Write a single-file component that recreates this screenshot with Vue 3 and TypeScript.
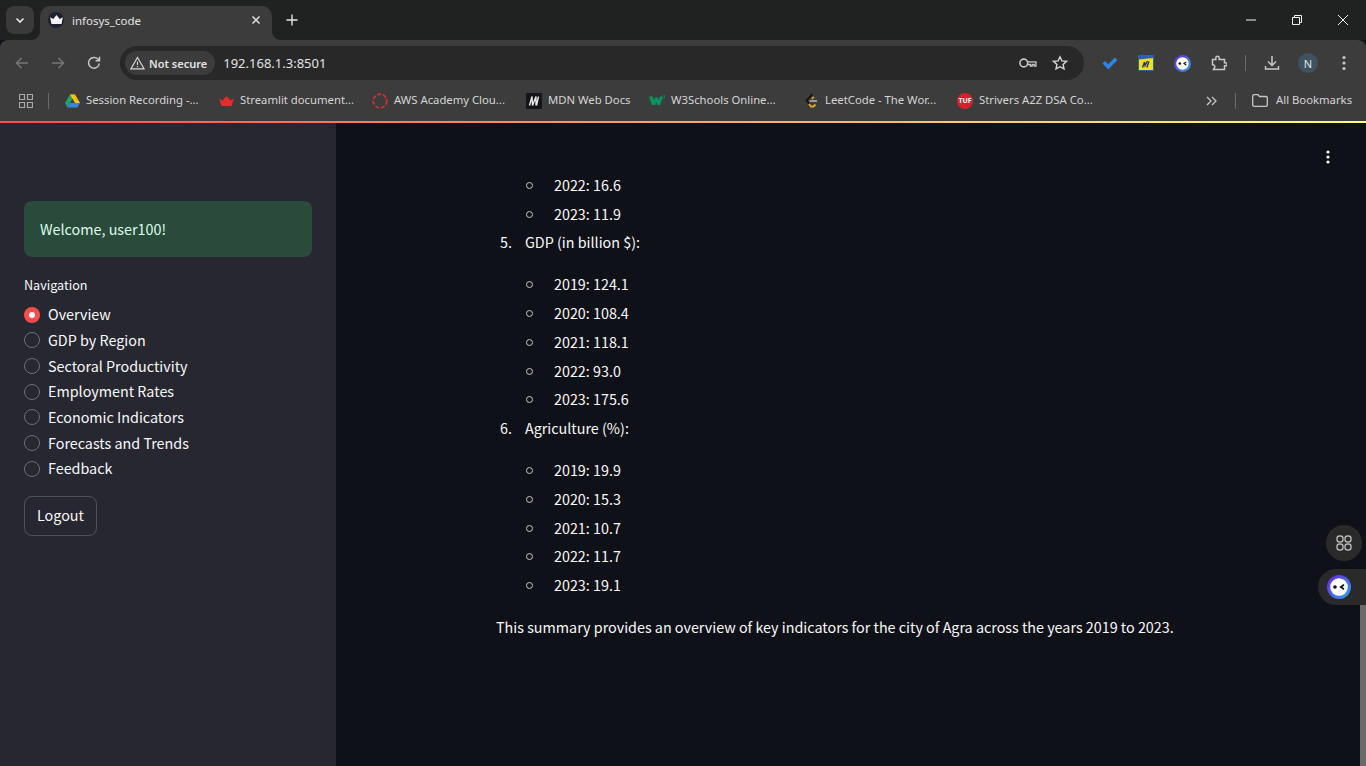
<template>
  <div class="window">
    <!-- Tab strip -->
    <div class="tabstrip">
      <div class="tab-search">
        <svg width="12" height="12" viewBox="0 0 12 12"><path d="M2.500 4.500 6 8l3.500-3.500" fill="none" stroke="#e3e3e3" stroke-width="1.700" /></svg>
      </div>
      <div class="tab">
        <span class="tab-favicon">
          <svg width="13" height="10" viewBox="0 0 14 11"><path d="M0 2.500l3.500 2L7 0l3.500 4.500 3.500-2-1.500 7.500h-11z" fill="#f4f4f4" /></svg>
        </span>
        <span class="tab-title">infosys_code</span>
        <svg class="tab-close" width="10" height="10" viewBox="0 0 10 10"><path d="M1.500 1.500l7 7M8.500 1.500l-7 7" stroke="#e3e3e3" stroke-width="1.500" /></svg>
      </div>
      <svg class="new-tab" width="12" height="12" viewBox="0 0 12 12"><path d="M6 .5v11M.5 6h11" stroke="#e3e3e3" stroke-width="1.400" /></svg>
      <div class="window-controls">
        <svg width="12" height="12" viewBox="0 0 12 12"><path d="M1 6h10" stroke="#f2f2f2" stroke-width="1" /></svg>
        <svg width="12" height="12" viewBox="0 0 12 12"><path d="M1.500 3.500h7v7h-7zM3.500 3.500v-2h7v7h-2" fill="none" stroke="#f2f2f2" stroke-width="1" /></svg>
        <svg width="12" height="12" viewBox="0 0 12 12"><path d="M1 1l10 10M11 1 1 11" stroke="#f2f2f2" stroke-width="1" /></svg>
      </div>
    </div>

    <!-- Toolbar -->
    <div class="toolbar">
      <div class="nav-buttons">
        <svg width="16" height="16" viewBox="0 0 16 16"><path d="M14 8H3M7.500 3 2.500 8l5 5" fill="none" stroke="#757575" stroke-width="1.500" /></svg>
        <svg width="16" height="16" viewBox="0 0 16 16"><path d="M2 8h11M8.500 3l5 5-5 5" fill="none" stroke="#757575" stroke-width="1.500" /></svg>
        <svg width="16" height="16" viewBox="0 0 16 16"><path d="M13.300 8.500A5.400 5.400 0 1 1 11.800 4L13.500 5.700M13.500 1.800v3.900H9.600" fill="none" stroke="#c7c7c7" stroke-width="1.500" /></svg>
      </div>
      <div class="omnibox">
        <div class="security-chip">
          <svg width="15" height="14" viewBox="0 0 15 14"><path d="M7.500 1.500 14 12.800H1zM7.500 5.500v3.600M7.500 10v1.200" fill="none" stroke="#d5d5d5" stroke-width="1.200" /></svg>
          <span>Not secure</span>
        </div>
        <span class="url">192.168.1.3:8501</span>
        <div class="omnibox-actions">
          <svg width="18" height="12" viewBox="0 0 18 12"><circle cx="4.800" cy="6" r="3.900" fill="none" stroke="#c7c7c7" stroke-width="1.600" /><path d="M9 4.800h8v4.200h-1.800V7.500h-2V9h-1.800V7.500H9" fill="none" stroke="#c7c7c7" stroke-width="1.300" /></svg>
          <svg width="16" height="16" viewBox="0 0 16 16"><path d="M8 1.800l1.900 4.100 4.500.5-3.300 3 .9 4.500L8 11.700l-4 2.200.9-4.500-3.300-3 4.500-.5z" fill="none" stroke="#d5d5d5" stroke-width="1.400" /></svg>
        </div>
      </div>
      <div class="extensions">
        <svg width="16" height="13" viewBox="0 0 16 13"><path d="M.5 6.500 3 4l3.300 3.200L12.800.500 15.500 3 6.300 12.500z" fill="#2a86e0" /></svg>
        <svg width="16" height="16" viewBox="0 0 16 16"><rect width="16" height="16" fill="#2b5fb0" /><path d="M1 4.500 15 3v12H1z" fill="#f7e017" /><path d="M4.500 12.500 6.500 7l.5 3.500L9.500 6M8.800 12.500l2.200-6" fill="none" stroke="#24307f" stroke-width="1.400" /></svg>
        <svg width="17" height="17" viewBox="0 0 17 17"><defs><linearGradient id="ext-ring" x1="0" y1="0" x2="1" y2="1"><stop offset="0" stop-color="#6a22d8" /><stop offset="1" stop-color="#2aa5f0" /></linearGradient></defs><circle cx="8.500" cy="8.500" r="8.500" fill="url(#ext-ring)" /><circle cx="8.500" cy="8.500" r="6.200" fill="#fff" /><circle cx="5.800" cy="8.500" r="1.300" fill="#111" /><path d="M12.200 7 10 8.500l2.200 1.500" fill="none" stroke="#111" stroke-width="1.200" /></svg>
        <svg width="16" height="16" viewBox="0 0 16 16"><path d="M1.500 4.500h3.300V3a1.700 1.700 0 0 1 3.400 0v1.500h5.300v3.300h1a1.500 1.500 0 0 1 0 3h-1v3.700H2.500l1-1.800a2 2 0 0 0-2-3z" fill="none" stroke="#c7c7c7" stroke-width="1.500" /></svg>
      </div>
      <span class="toolbar-sep"></span>
      <div class="toolbar-right">
        <svg width="16" height="16" viewBox="0 0 16 16"><path d="M8 1v9M4 6.500 8 10.500l4-4M1.500 11v3h13v-3" fill="none" stroke="#c7c7c7" stroke-width="1.500" /></svg>
        <span class="avatar">N</span>
        <svg class="kebab" width="4" height="16" viewBox="0 0 4 16"><circle cx="2" cy="2.500" r="1.600" fill="#c7c7c7" /><circle cx="2" cy="8" r="1.600" fill="#c7c7c7" /><circle cx="2" cy="13.500" r="1.600" fill="#c7c7c7" /></svg>
      </div>
    </div>

    <!-- Bookmarks bar -->
    <div class="bookmarks">
      <svg class="apps" width="14" height="14" viewBox="0 0 14 14"><path d="M.5.500h5v5h-5zM8.500.500h5v5h-5zM.5 8.500h5v5h-5zM8.500 8.500h5v5h-5z" fill="none" stroke="#a8a8a8" stroke-width="1.200" /></svg>
      <span class="bm-sep first"></span>
      <div v-for="b in bookmarks" :key="b.label" class="bookmark" :style="{ width: b.width + 'px' }">
        <span class="bm-icon">
          <svg v-if="b.icon === 'drive'" width="15" height="14" viewBox="0 0 15 14"><path d="M5 .5h5L5 9 2.500 13.500 0 9z" fill="#1fa463" /><path d="M5 .5h5L15 9h-5z" fill="#ffc107" /><path d="M2.500 13.500 5 9h10l-2.500 4.500z" fill="#3b82e6" /></svg>
          <svg v-else-if="b.icon === 'crown'" width="15" height="10" viewBox="0 0 15 10"><path d="M0 2.500l3.500 2.300L5 2.500 7.500 0 10 2.500l1.500 2.300L15 2.500 12.500 10h-10z" fill="#e52d2d" /></svg>
          <svg v-else-if="b.icon === 'aws'" width="16" height="16" viewBox="0 0 16 16"><circle cx="8" cy="8" r="6.800" fill="none" stroke="#d9302c" stroke-width="1.700" stroke-dasharray="4 1.800" /></svg>
          <svg v-else-if="b.icon === 'mdn'" width="16" height="16" viewBox="0 0 16 16"><rect width="16" height="16" fill="#15141a" /><path d="M3.500 12.500 6 3.500 6.500 12.500 10 3.500 10 12.500M12.500 3.500 10.500 12.500" fill="none" stroke="#e8e8e8" stroke-width="1.400" /></svg>
          <svg v-else-if="b.icon === 'w3'" width="16" height="11" viewBox="0 0 16 11"><path d="M0 1.500h3.600l1.400 4 1.300-3.200h2.200l1.300 3.200 1.400-4H14l-3 8.500H8.500L7.400 7 6.200 10H3z" fill="#04965f" /><path d="M14.200.5h1.600v.6l-.7.7h.7v1.400h-1.600" fill="none" stroke="#04965f" stroke-width=".7" /></svg>
          <svg v-else-if="b.icon === 'leet'" width="14" height="16" viewBox="0 0 14 16"><path d="M8.500 1 2.500 7.500 5 10.500" fill="none" stroke="#111" stroke-width="1.800" /><path d="M5 11 7 13.500h2.500l2-2" fill="none" stroke="#f0a21e" stroke-width="1.800" /><path d="M10 3.800 7.800 5.800" stroke="#f0a21e" stroke-width="1.600" /><path d="M5.500 8h7.500" stroke="#bdbdbd" stroke-width="1.500" /></svg>
          <span v-else class="tuf">TUF</span>
        </span>
        <span class="bm-label">{{ b.label }}</span>
      </div>
      <svg class="overflow" width="11" height="10" viewBox="0 0 11 10"><path d="M1 1l4 4-4 4M6 1l4 4-4 4" fill="none" stroke="#c7c7c7" stroke-width="1.300" /></svg>
      <span class="bm-sep"></span>
      <div class="all-bookmarks">
        <svg width="16" height="13" viewBox="0 0 16 13"><path d="M.7 2.200c0-.8.500-1.500 1.300-1.500h4l1.500 1.800H14c.8 0 1.300.600 1.300 1.400v7c0 .8-.5 1.400-1.300 1.400H2c-.8 0-1.300-.6-1.300-1.400z" fill="none" stroke="#c7c7c7" stroke-width="1.300" /></svg>
        <span class="bm-label">All Bookmarks</span>
      </div>
    </div>

    <div class="decoration"></div>

    <!-- Streamlit app -->
    <div class="app">
      <aside class="sidebar">
        <div class="alert">Welcome, user100!</div>
        <div class="nav-title">Navigation</div>
        <div class="radio-group">
          <label v-for="(item, i) in navItems" :key="item" class="radio">
            <span class="radio-dot" :class="{ on: i === 0 }"></span>
            <span class="radio-label">{{ item }}</span>
          </label>
        </div>
        <button class="logout">Logout</button>
      </aside>

      <main class="main">
        <svg class="menu" width="4" height="14" viewBox="0 0 4 14"><circle cx="2" cy="2" r="1.600" fill="#fafafa" /><circle cx="2" cy="7" r="1.600" fill="#fafafa" /><circle cx="2" cy="12" r="1.600" fill="#fafafa" /></svg>
        <div class="content">
          <ul class="sub top">
            <li v-for="row in topRows" :key="row">{{ row }}</li>
          </ul>
          <ol class="list">
            <li v-for="group in groups" :key="group.n" class="group">
              <span class="num">{{ group.n }}.</span>
              <p class="group-title">{{ group.title }}</p>
              <ul class="sub">
                <li v-for="row in group.rows" :key="row">{{ row }}</li>
              </ul>
            </li>
          </ol>
          <p class="summary">This summary provides an overview of key indicators for the city of Agra across the years 2019 to 2023.</p>
        </div>

        <!-- Floating extension widget -->
        <div class="float-grid">
          <svg width="18" height="18" viewBox="0 0 18 18"><g fill="none" stroke="#b5b5b5" stroke-width="1.400"><rect x="2" y="2" width="6" height="6" rx="2.500" /><rect x="10" y="2" width="6" height="6" rx="2.500" /><rect x="2" y="10" width="6" height="6" rx="2.500" /><rect x="10" y="10" width="6" height="6" rx="2.500" /></g></svg>
        </div>
        <div class="float-bot">
          <svg width="24" height="24" viewBox="0 0 24 24"><defs><linearGradient id="bot-ring" x1="0" y1="0" x2="1" y2="1"><stop offset="0" stop-color="#6a22d8" /><stop offset="1" stop-color="#2aa5f0" /></linearGradient></defs><circle cx="12" cy="12" r="12" fill="url(#bot-ring)" /><circle cx="12" cy="12" r="8.800" fill="#fff" /><circle cx="8" cy="12" r="1.800" fill="#111" /><path d="M17 9.800 13.800 12l3.200 2.200" fill="none" stroke="#111" stroke-width="1.700" /></svg>
        </div>
        <div class="scroll-thumb"></div>
      </main>
    </div>
  </div>
</template>

<script setup lang="ts">
interface Bookmark {
  label: string
  icon: string
  width: number
}

const bookmarks: Bookmark[] = [
  { label: 'Session Recording -...', icon: 'drive', width: 154 },
  { label: 'Streamlit document...', icon: 'crown', width: 154 },
  { label: 'AWS Academy Clou...', icon: 'aws', width: 154 },
  { label: 'MDN Web Docs', icon: 'mdn', width: 123 },
  { label: 'W3Schools Online...', icon: 'w3', width: 154 },
  { label: 'LeetCode - The Wor...', icon: 'leet', width: 154 },
  { label: 'Strivers A2Z DSA Co...', icon: 'tuf', width: 249 },
]

const navItems = [
  'Overview',
  'GDP by Region',
  'Sectoral Productivity',
  'Employment Rates',
  'Economic Indicators',
  'Forecasts and Trends',
  'Feedback',
]

const topRows = ['2022: 16.6', '2023: 11.9']

const groups = [
  {
    n: 5,
    title: 'GDP (in billion $):',
    rows: ['2019: 124.1', '2020: 108.4', '2021: 118.1', '2022: 93.0', '2023: 175.6'],
  },
  {
    n: 6,
    title: 'Agriculture (%):',
    rows: ['2019: 19.9', '2020: 15.3', '2021: 10.7', '2022: 11.7', '2023: 19.1'],
  },
]
</script>

<style scoped>
.window {
  height: 766px;
  display: flex;
  flex-direction: column;
  overflow: hidden;
  background: #0e1117;
  font-family: "Noto Sans", "Open Sans", sans-serif;
}

/* Tab strip */
.tabstrip {
  height: 40px;
  flex: none;
  display: flex;
  align-items: flex-end;
  background: #202221;
  padding-left: 6px;
}

.tab-search {
  width: 28px;
  height: 28px;
  margin-bottom: 6px;
  border-radius: 8px;
  background: #3a3a3a;
  display: flex;
  align-items: center;
  justify-content: center;
}

.tab {
  position: relative;
  width: 232px;
  height: 34px;
  margin-left: 6px;
  border-radius: 10px 10px 0 0;
  background: #3c3c3c;
  display: flex;
  align-items: center;
  padding: 0 11px 6px 8px;
  box-sizing: border-box;
}

/* flared corners where the tab meets the toolbar */
.tab::before,
.tab::after {
  content: "";
  position: absolute;
  bottom: 0;
  width: 8px;
  height: 8px;
}

.tab::before {
  left: -8px;
  background: radial-gradient(circle at 0 0, transparent 7.500px, #3c3c3c 8px);
}

.tab::after {
  right: -8px;
  background: radial-gradient(circle at 100% 0, transparent 7.500px, #3c3c3c 8px);
}

.tab-favicon {
  width: 16px;
  height: 16px;
  border-radius: 50%;
  background: #1d2230;
  display: flex;
  align-items: center;
  justify-content: center;
}

.tab-title {
  margin-left: 8px;
  flex: 1;
  font-size: 11.500px;
  color: #e3e3e3;
}

.new-tab {
  margin: 0 0 14px 14px;
}

.window-controls {
  margin-left: auto;
  align-self: center;
  display: flex;
  gap: 34px;
  padding-right: 17px;
}

/* Toolbar */
.toolbar {
  height: 46px;
  flex: none;
  display: flex;
  align-items: center;
  background: #3c3c3c;
  border-radius: 8px 8px 0 0;
  position: relative;
}

.nav-buttons {
  width: 120px;
  flex: none;
  display: flex;
  gap: 20px;
  padding-left: 14px;
  box-sizing: border-box;
}

.omnibox {
  width: 964px;
  height: 34px;
  flex: none;
  border-radius: 17px;
  background: #282828;
  display: flex;
  align-items: center;
  padding-left: 5px;
  box-sizing: border-box;
}

.security-chip {
  height: 24px;
  display: flex;
  align-items: center;
  gap: 4px;
  padding: 0 8px 0 5px;
  border-radius: 12px;
  background: #3c3c3c;
  font-size: 11px;
  font-weight: 600;
  color: #e3e3e3;
}

.url {
  margin-left: 8px;
  font-size: 13px;
  color: #e3e3e3;
}

.omnibox-actions {
  margin-left: auto;
  display: flex;
  align-items: center;
  gap: 15px;
  padding-right: 16px;
}

.extensions {
  display: flex;
  align-items: center;
  gap: 20px;
  padding-left: 18px;
}

.toolbar-sep {
  width: 1px;
  height: 16px;
  margin-left: 18px;
  background: #6a6a6a;
}

.toolbar-right {
  display: flex;
  align-items: center;
  gap: 21px;
  padding-left: 18px;
}

.kebab {
  margin-left: 3px;
}

.avatar {
  width: 20px;
  height: 20px;
  margin-left: -3px;
  border-radius: 50%;
  background: #3d5361;
  color: #e3e3e3;
  font-size: 11px;
  display: flex;
  align-items: center;
  justify-content: center;
}

/* Bookmarks */
.bookmarks {
  height: 35px;
  flex: none;
  display: flex;
  align-items: center;
  background: #3c3c3c;
  padding: 0 0 6px 19px;
  box-sizing: border-box;
}

.apps {
  flex: none;
}

.bm-sep {
  width: 1px;
  height: 16px;
  margin: 0 16px 0 18px;
  background: #6a6a6a;
}

.bm-sep.first {
  margin: 0 15px 0 15px;
}

.bookmark {
  flex: none;
  display: flex;
  align-items: center;
}

.bm-icon {
  width: 16px;
  display: flex;
  justify-content: center;
  flex: none;
  margin-right: 6px;
}

.bm-label {
  font-size: 11.300px;
  line-height: 14px;
  padding-bottom: 2px;
  color: #d5d5d5;
  white-space: nowrap;
}

.tuf {
  width: 16px;
  height: 16px;
  border-radius: 50%;
  background: #d81f2c;
  color: #fff;
  font-size: 7px;
  font-weight: 700;
  display: flex;
  align-items: center;
  justify-content: center;
}

.overflow {
  flex: none;
}

.all-bookmarks {
  display: flex;
  align-items: center;
  gap: 8px;
}

.decoration {
  height: 2px;
  flex: none;
  background: linear-gradient(90deg, #ff4b4b, #fffd80);
}

/* App */
.app {
  flex: 1;
  display: flex;
  min-height: 0;
  font-family: "Noto Sans CJK SC", "Noto Sans", sans-serif;
  color: #fafafa;
}

.sidebar {
  width: 336px;
  flex: none;
  background: #262730;
  padding: 78px 24px 0;
  box-sizing: border-box;
}

.alert {
  height: 56px;
  border-radius: 8px;
  background: rgba(61, 213, 109, 0.2);
  color: #dffde9;
  display: flex;
  align-items: center;
  padding: 0 0 2px 16px;
  box-sizing: border-box;
  font-size: 14.330px;
}

.nav-title {
  margin-top: 19px;
  font-size: 12.600px;
  line-height: 18px;
}

.radio-group {
  margin-top: 8px;
  display: flex;
  flex-direction: column;
}

.radio {
  height: 25.660px;
  display: flex;
  align-items: center;
  gap: 8px;
  font-size: 14.330px;
}

.radio-label {
  padding-bottom: 2px;
}

.radio-dot {
  width: 16px;
  height: 16px;
  border-radius: 50%;
  border: 1px solid #6d6e76;
  box-sizing: border-box;
  background: #262730;
}

.radio-dot.on {
  border: 5px solid #ff4b4b;
  background: #fff;
}

.logout {
  display: block;
  height: 40px;
  margin-top: 14px;
  padding: 0 12px 2px;
  border: 1px solid rgba(250, 250, 250, 0.2);
  border-radius: 8px;
  background: transparent;
  color: #fafafa;
  font-family: inherit;
  font-size: 14.330px;
}

.main {
  flex: 1;
  position: relative;
  overflow: hidden;
}

.menu {
  position: absolute;
  top: 27px;
  right: 36px;
}

.content {
  width: 736px;
  margin-left: 160px;
  padding-top: 49px;
  font-size: 14.330px;
  line-height: 25.600px;
}

.list {
  list-style: none;
  margin: 0;
  padding: 0;
}

.group {
  position: relative;
  padding-left: 29px;
}

.num {
  position: absolute;
  left: 4px;
  top: 0;
}

.group-title {
  margin: 0 0 16.400px;
}

.sub {
  list-style: none;
  margin: 0;
  padding-left: 29px;
}

.sub.top {
  padding-left: 58px;
}

.sub li {
  position: relative;
  margin-bottom: 3.150px;
}

/* hollow bullet, sized like the original marker */
.sub li::before {
  content: "";
  position: absolute;
  left: -28.500px;
  top: 10px;
  width: 7px;
  height: 7px;
  box-sizing: border-box;
  border: 1.500px solid #c9c9c9;
  border-radius: 50%;
}

.summary {
  margin: 16px 0 0;
}

/* Floating widget */
.float-grid {
  position: absolute;
  top: 402px;
  right: 4px;
  width: 36px;
  height: 36px;
  border-radius: 50%;
  background: #2a2a2a;
  display: flex;
  align-items: center;
  justify-content: center;
}

.float-bot {
  position: absolute;
  top: 446px;
  right: 0;
  width: 48px;
  height: 36px;
  padding-left: 9px;
  box-sizing: border-box;
  border-radius: 18px 0 0 18px;
  background: #2a2a2a;
  display: flex;
  align-items: center;
  z-index: 1;
}

.scroll-thumb {
  position: absolute;
  top: 480px;
  right: 0;
  bottom: 0;
  width: 6px;
  background: #6a6a6a;
}
</style>

<style>
html,
body {
  margin: 0;
  overflow: hidden;
  background: #0e1117;
}
</style>
